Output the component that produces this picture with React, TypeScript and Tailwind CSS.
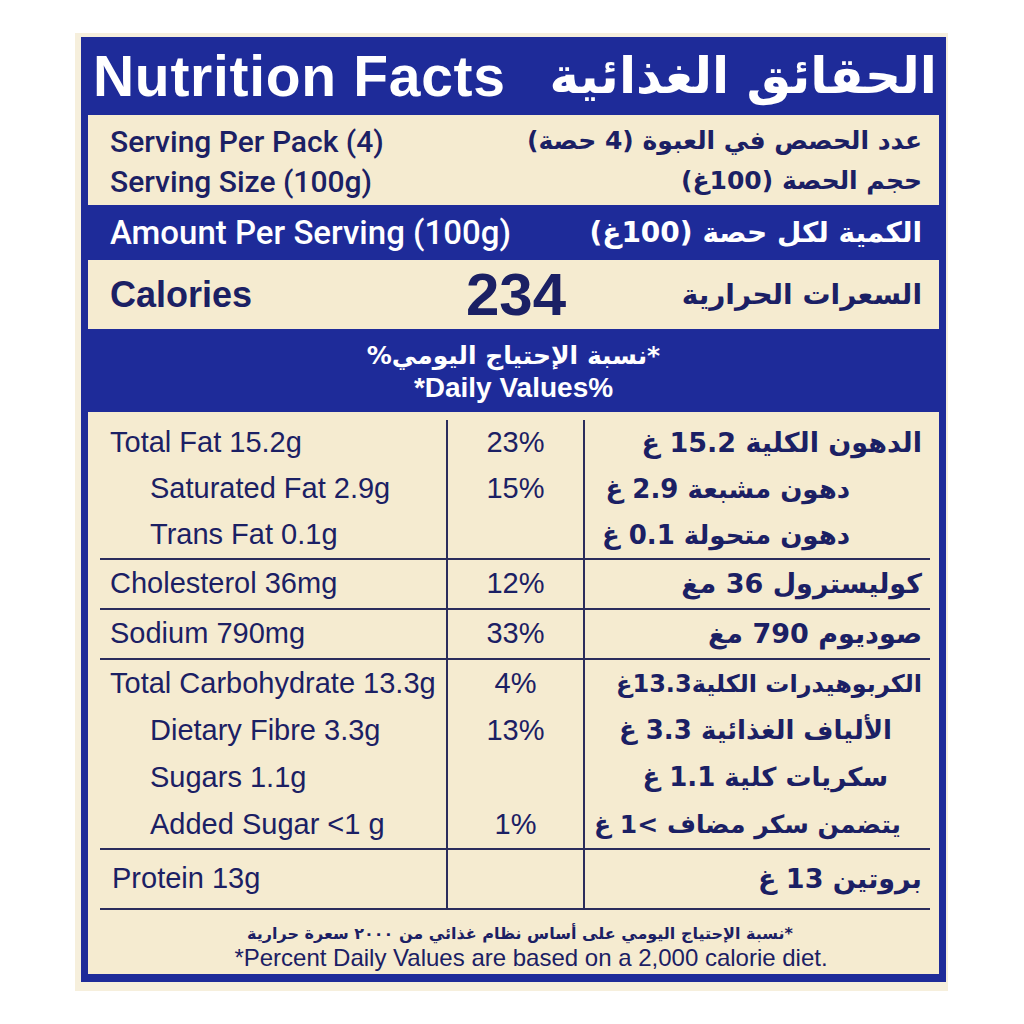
type Row = {
  en: string;
  pct?: string;
  ar: string;
  enPad: string;
  arPad: string;
  arSize: string;
  h: string;
};

// label rows, grouped between the horizontal rules
const groups: Row[][] = [
  [
    { en: "Total Fat 15.2g", pct: "23%", ar: "الدهون الكلية 15.2 غ", enPad: "pl-[10px]", arPad: "pr-[8px]", arSize: "text-[27px]", h: "h-[46px]" },
    { en: "Saturated Fat 2.9g", pct: "15%", ar: "دهون مشبعة 2.9 غ", enPad: "pl-[50px]", arPad: "pr-[80px]", arSize: "text-[26px]", h: "h-[46px]" },
    { en: "Trans Fat 0.1g", ar: "دهون متحولة 0.1 غ", enPad: "pl-[50px]", arPad: "pr-[80px]", arSize: "text-[26px]", h: "h-[46px]" },
  ],
  [{ en: "Cholesterol 36mg", pct: "12%", ar: "كوليسترول 36 مغ", enPad: "pl-[10px]", arPad: "pr-[8px]", arSize: "text-[27px]", h: "h-[48px]" }],
  [{ en: "Sodium 790mg", pct: "33%", ar: "صوديوم 790 مغ", enPad: "pl-[10px]", arPad: "pr-[8px]", arSize: "text-[27px]", h: "h-[48px]" }],
  [
    { en: "Total Carbohydrate 13.3g", pct: "4%", ar: "الكربوهيدرات الكلية13.3غ", enPad: "pl-[10px]", arPad: "pr-[8px]", arSize: "text-[24px]", h: "h-[47px]" },
    { en: "Dietary Fibre 3.3g", pct: "13%", ar: "الألياف الغذائية 3.3 غ", enPad: "pl-[50px]", arPad: "pr-[38px]", arSize: "text-[26px]", h: "h-[47px]" },
    { en: "Sugars 1.1g", ar: "سكريات كلية 1.1 غ", enPad: "pl-[50px]", arPad: "pr-[42px]", arSize: "text-[26px]", h: "h-[47px]" },
    { en: "Added Sugar <1 g", pct: "1%", ar: "يتضمن سكر مضاف >1 غ", enPad: "pl-[50px]", arPad: "pr-[29px]", arSize: "text-[25px]", h: "h-[47px]" },
  ],
  [{ en: "Protein 13g", ar: "بروتين 13 غ", enPad: "pl-[12px]", arPad: "pr-[8px]", arSize: "text-[27px]", h: "h-[58px]" }],
];

const EN = "font-['Liberation_Sans',Arial,sans-serif]";
const MED = "font-['Roboto','Liberation_Sans',sans-serif]";
const AR = "font-['DejaVu_Sans','Noto_Sans',sans-serif]";

export default function App() {
  return (
    <div className="w-[1024px] h-[1024px] bg-white pt-[33px] pl-[75px]">
      <div className="w-[873px] h-[958px] bg-[#f6efdc] pt-[4px] pl-[6px]">
        <div className="w-[865px] h-[945px] bg-[#1e2b99] px-[7px] pb-[8px] flex flex-col">
          {/* title */}
          <div className="h-[78px] flex items-center justify-between pl-[5px] pr-[2px] text-white">
            <span className={`${EN} text-[57px] font-bold leading-none tracking-[0.7px]`}>Nutrition Facts</span>
            <span dir="rtl" className={`${AR} text-[50px] font-bold leading-none`}>الحقائق الغذائية</span>
          </div>

          {/* serving info */}
          <div className="h-[90px] bg-[#f5ebd0] pt-[6px] pl-[22px] pr-[17px] text-[#1b2064]">
            <div className="h-[40px] flex items-center justify-between">
              <span className={`${MED} text-[30px] font-medium`}>Serving Per Pack (4)</span>
              <span dir="rtl" className={`${AR} text-[25px] font-bold`}>عدد الحصص في العبوة (4 حصة)</span>
            </div>
            <div className="h-[40px] flex items-center justify-between">
              <span className={`${MED} text-[30px] font-medium`}>Serving Size (100g)</span>
              <span dir="rtl" className={`${AR} text-[25px] font-bold`}>حجم الحصة (100غ)</span>
            </div>
          </div>

          <div className="h-[55px] flex items-center justify-between pl-[22px] pr-[17px] text-white">
            <span className={`${MED} text-[33px] font-medium`}>Amount Per Serving (100g)</span>
            <span dir="rtl" className={`${AR} text-[28px] font-bold`}>الكمية لكل حصة (100غ)</span>
          </div>

          {/* calories */}
          <div className="h-[69px] bg-[#f5ebd0] grid grid-cols-3 items-center pl-[22px] pr-[17px] text-[#1b2064]">
            <span className={`${EN} text-[36px] font-bold`}>Calories</span>
            <span className={`${EN} text-[60px] font-bold text-center leading-none`}>234</span>
            <span dir="rtl" className={`${AR} text-[28px] font-bold`}>السعرات الحرارية</span>
          </div>

          <div className="h-[83px] pt-[11px] flex flex-col items-center text-white">
            <span dir="rtl" className={`${AR} text-[25px] font-bold leading-[32px]`}>*نسبة الإحتياج اليومي%</span>
            <span className={`${EN} text-[28px] font-bold leading-[32px]`}>*Daily Values%</span>
          </div>

          {/* table */}
          <div className="h-[562px] bg-[#f5ebd0] pt-[8px] pl-[12px] pr-[9px] flex flex-col text-[#1b2064]">
            {groups.map((g, gi) => (
              <div key={gi}>
                {g.map((r) => (
                  <div key={r.en} className={`grid grid-cols-[346px_139px_1fr] ${r.h}`}>
                    <div className={`flex items-center whitespace-nowrap ${r.enPad} ${EN} text-[29px]`}>{r.en}</div>
                    <div className={`flex items-center justify-center border-x-2 border-[#2b2d5c] ${EN} text-[29px]`}>
                      {r.pct}
                    </div>
                    <div
                      dir="rtl"
                      className={`flex items-center whitespace-nowrap ${r.arPad} ${AR} ${r.arSize} font-bold`}
                    >
                      {r.ar}
                    </div>
                  </div>
                ))}
                <div className="h-[2px] bg-[#2b2d5c]" />
              </div>
            ))}
            <div className="pt-[12px] flex flex-col items-center">
              <span dir="rtl" className={`${AR} text-[16px] font-bold leading-[24px] ml-[10px]`}>
                *نسبة الإحتياج اليومي على أساس نظام غذائي من ٢٠٠٠ سعرة حرارية
              </span>
              <span className={`${EN} text-[24px] leading-[24px] ml-[32px]`}>
                *Percent Daily Values are based on a 2,000 calorie diet.
              </span>
            </div>
          </div>
        </div>
      </div>
    </div>
  );
}
